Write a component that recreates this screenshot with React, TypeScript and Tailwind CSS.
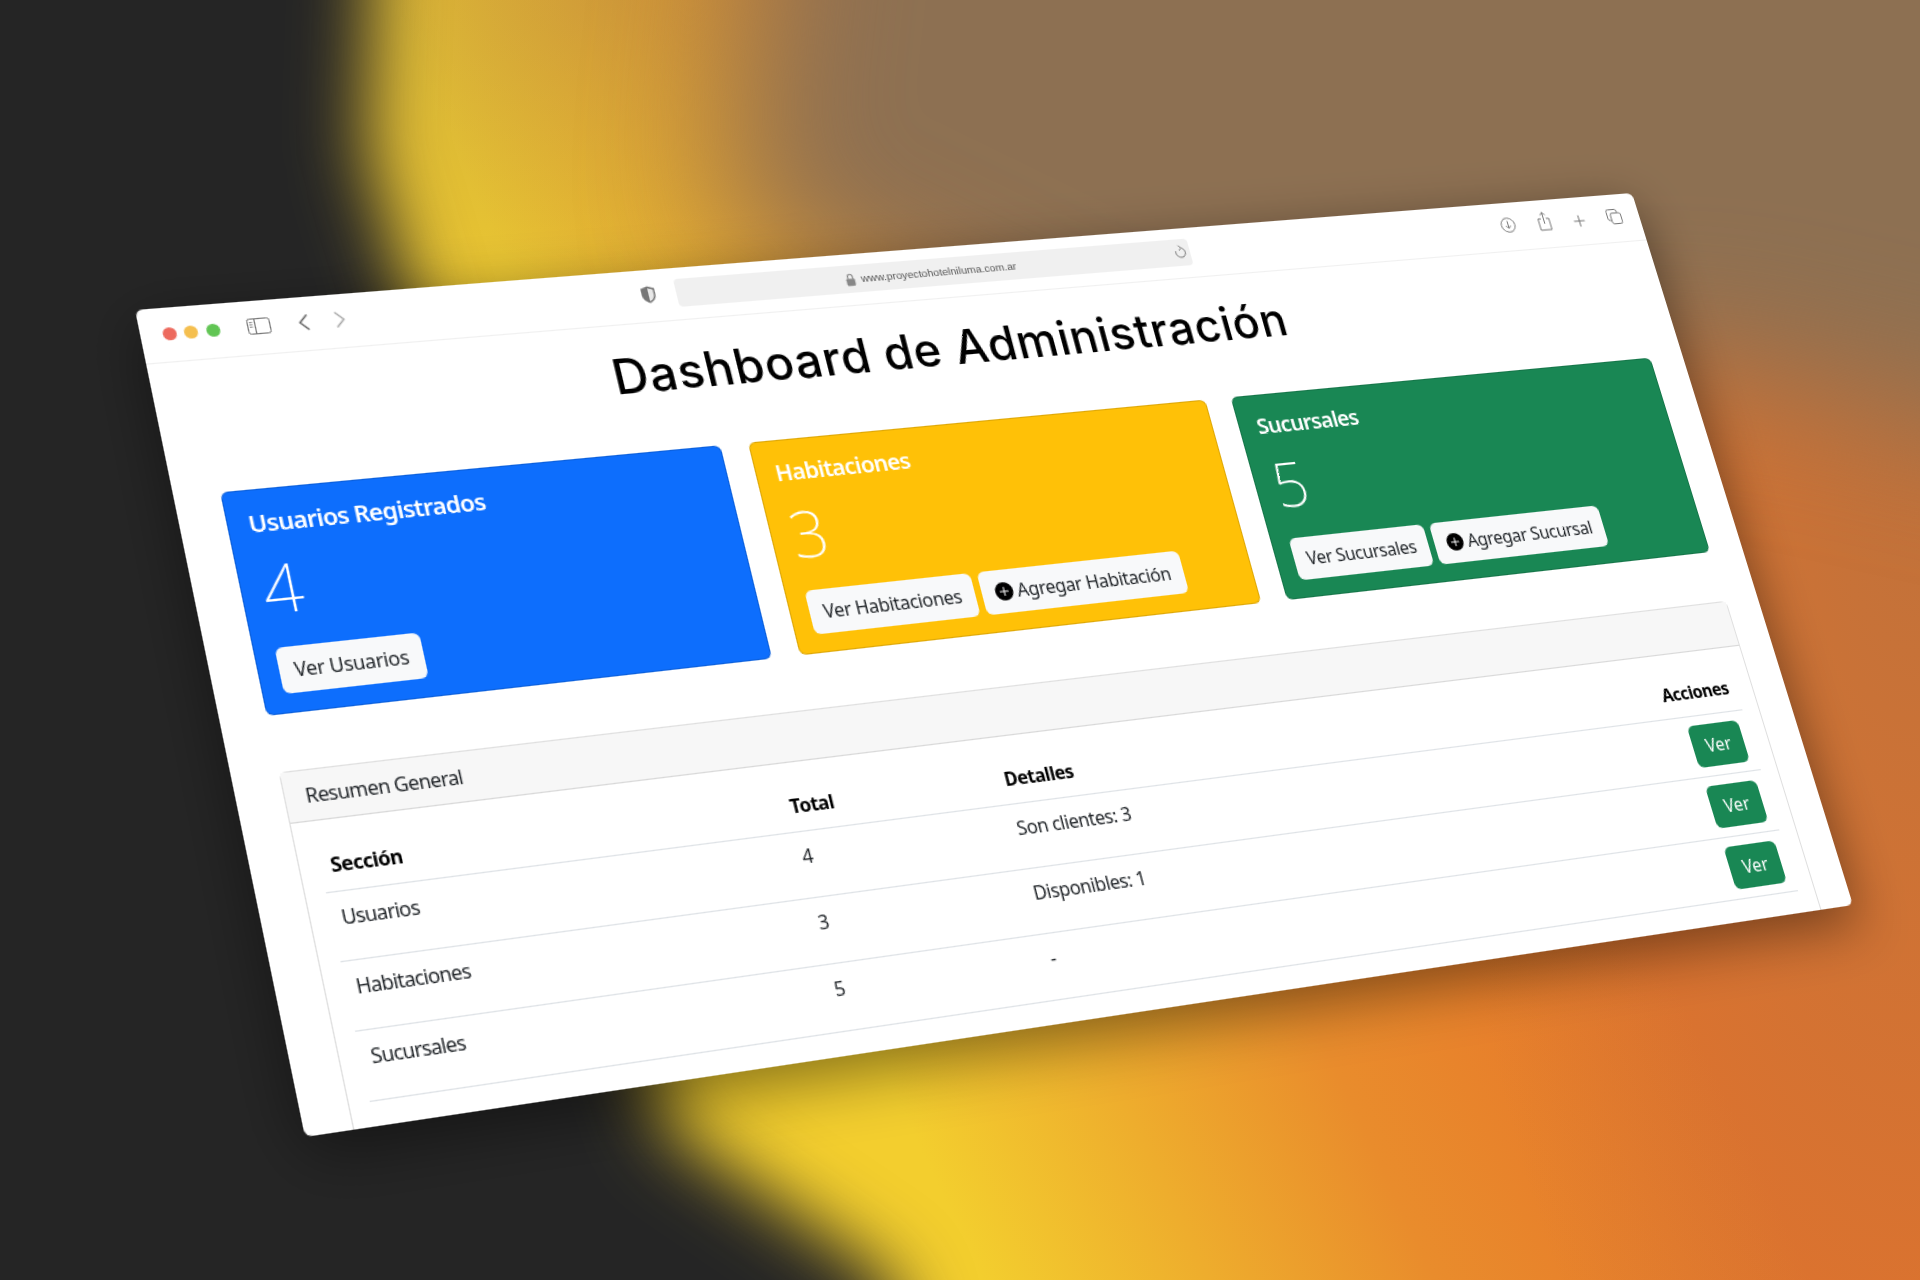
import { BsPlusCircleFill } from 'react-icons/bs'

const rows = [
  { name: 'Usuarios', total: '4', detail: 'Son clientes: 3' },
  { name: 'Habitaciones', total: '3', detail: 'Disponibles: 1' },
  { name: 'Sucursales', total: '5', detail: '-' },
]

function Backdrop() {
  return (
    <>
      <div className="absolute inset-0 bg-[linear-gradient(65deg,#f3ce2e_39%,#e98c2c_57%,#e6732a_72%,#e6732a_100%)]" />
      <div className="absolute inset-0 bg-[radial-gradient(500px_1300px_at_100%_30%,#8d705270_0%,#8d705200_100%)]" />
      <div className="absolute inset-0 bg-[radial-gradient(800px_420px_at_32%_0%,#8d705250_0%,#8d705200_100%)]" />
      <div className="absolute left-[-400px] top-[-400px] h-[2080px] w-[2720px] blur-[70px]">
        <div className="size-full bg-[#8d7052] [clip-path:polygon(1200px_0px,1130px_620px,1500px_800px,2100px_760px,2720px_900px,2720px_0px)]" />
      </div>
      <div className="absolute left-[-400px] top-[-400px] h-[2080px] w-[2720px] blur-[35px]">
        <div className="size-full bg-[#252525] [clip-path:polygon(0px_0px,785px_0px,765px_550px,1070px_1530px,1290px_1680px,1400px_2080px,0px_2080px)]" />
      </div>
    </>
  )
}

function Toolbar() {
  return (
    <div className="relative h-[47px] shrink-0 border-b border-[#f0f0f0]">
      <span className="absolute left-[17.5px] top-[16.5px] size-[11px] rounded-full bg-[#ed6a5e]" />
      <span className="absolute left-[35px] top-[16.5px] size-[11px] rounded-full bg-[#f5bf4f]" />
      <span className="absolute left-[52.5px] top-[16.5px] size-[11px] rounded-full bg-[#61c554]" />

      <svg className="absolute left-[86px] top-[15px]" width="19" height="14" viewBox="0 0 19 14" fill="none" stroke="#777" strokeWidth="1">
        <rect x="0.5" y="0.5" width="18" height="13" rx="2" />
        <path d="M6.5 0.5v13" />
        <path d="M2 3.5h2.5M2 5.5h2.5M2 7.5h2.5" strokeWidth="0.8" />
      </svg>
      <svg className="absolute left-[127px] top-[14px]" width="10" height="16" viewBox="0 0 10 16" fill="none" stroke="#666" strokeWidth="1.4">
        <path d="M8.5 1.5 2 8l6.5 6.5" />
      </svg>
      <svg className="absolute left-[157px] top-[14px]" width="10" height="16" viewBox="0 0 10 16" fill="none" stroke="#aaa" strokeWidth="1.4">
        <path d="M1.5 1.5 8 8l-6.5 6.5" />
      </svg>
      <svg className="absolute left-[416px] top-[13px]" width="14" height="18" viewBox="0 0 13 16">
        <path d="M6.5 1 12 3v5c0 3.5-2.5 5.7-5.5 7C3.500 13.700 1 11.500 1 8V3z" fill="#777" />
        <path d="M6.500 2.600 10.700 4v4c0 2.700-1.900 4.500-4.200 5.500z" fill="#e8e8e8" />
      </svg>

      <div className="absolute left-[447px] top-[10px] flex h-[25px] w-[470px] items-center justify-center rounded-[4px] bg-[#f0f0f0] pr-[14px]">
        <svg className="mr-[5px]" width="9" height="12" viewBox="0 0 8 11">
          <path d="M2 5V3.200a2 2 0 0 1 4 0V5" fill="none" stroke="#888" strokeWidth="1" />
          <rect x="0.500" y="4.700" width="7" height="6" rx="1" fill="#888" />
        </svg>
        <span className="font-['Liberation_Sans',sans-serif] text-[9.700px] leading-none text-[#555]">www.proyectohotelniluma.com.ar</span>
        <svg className="absolute right-[3px] top-[5px]" width="12" height="14" viewBox="0 0 12 14" fill="none" stroke="#777" strokeWidth="1">
          <path d="M7.500 3.300A4.500 4.500 0 1 1 1.800 6" />
          <path d="M5 0.800 7.500 3.300 5 5.500" />
        </svg>
      </div>

      <svg className="absolute left-[1224px] top-[14px]" width="15" height="15" viewBox="0 0 15 15" fill="none" stroke="#777" strokeWidth="1">
        <circle cx="7.500" cy="7.500" r="6.800" />
        <path d="M7.500 3.500v7M5 8.200l2.500 2.500L10 8.200" />
      </svg>
      <svg className="absolute left-[1262px] top-[11px]" width="13" height="19" viewBox="0 0 13 19" fill="none" stroke="#777" strokeWidth="1">
        <path d="M4 7H1v11h11V7H9" />
        <path d="M6.500 12V1M3.800 3.500 6.500 1l2.700 2.500" />
      </svg>
      <svg className="absolute left-[1298px] top-[17px]" width="12" height="12" viewBox="0 0 12 12" fill="none" stroke="#777" strokeWidth="1.100">
        <path d="M6 0.500v11M0.500 6h11" />
      </svg>
      <svg className="absolute left-[1333px] top-[14px]" width="15" height="15" viewBox="0 0 15 15" fill="none" stroke="#777" strokeWidth="1">
        <rect x="4" y="4" width="10.500" height="10.500" rx="2" />
        <path d="M4 11H2.500A2 2 0 0 1 .5 9V2.500A2 2 0 0 1 2.500.5H9a2 2 0 0 1 2 2V4" />
      </svg>
    </div>
  )
}

function StatCard({
  title,
  value,
  color,
  children,
}: {
  title: string
  value: string
  color: string
  children: React.ReactNode
}) {
  return (
    <div className={`h-[186px] rounded-[6px] border border-[#00000020] p-4 text-white ${color}`}>
      <h5 className="mb-2 text-[20px] font-semibold leading-6 tracking-[-0.035em]">{title}</h5>
      <p className="mb-4 text-[56px] font-extralight leading-[67px]">{value}</p>
      <div className="flex gap-[6px]">{children}</div>
    </div>
  )
}

function LightButton({ children }: { children: React.ReactNode }) {
  return (
    <button className="flex h-[38px] items-center gap-1 rounded-[6px] bg-[#f8f9fa] px-3 text-[16px] tracking-[-0.02em] whitespace-nowrap text-[#212529]">
      {children}
    </button>
  )
}

export default function App() {
  return (
    <div className="relative h-[1280px] w-[1920px] overflow-hidden">
      <Backdrop />

      <div className="absolute left-0 top-0 flex h-[675px] w-[1366px] origin-top-left flex-col overflow-hidden rounded-[6px] bg-white font-['Noto_Sans',sans-serif] text-[#212529] shadow-[0_14px_50px_rgba(0,0,0,0.45)] [transform:matrix3d(1.26804,-0.065293,0,0.00010548,0.227674,1.135037,0,-0.00007929,0,0,1,0,135,310,0,1)]">
        <Toolbar />

        <h1 className="mt-[21px] text-center font-['Inter',sans-serif] text-[42px] font-[450] leading-[48px] tracking-[0.018em] text-black">
          Dashboard de Administración
        </h1>

        <div className="mt-[43px] grid grid-cols-3 gap-6 pl-[37px] pr-[33px]">
          <StatCard title="Usuarios Registrados" value="4" color="bg-[#0d6efd]">
            <LightButton>Ver Usuarios</LightButton>
          </StatCard>
          <StatCard title="Habitaciones" value="3" color="bg-[#ffc107]">
            <LightButton>Ver Habitaciones</LightButton>
            <LightButton>
              <BsPlusCircleFill className="size-4 text-black" />
              Agregar Habitación
            </LightButton>
          </StatCard>
          <StatCard title="Sucursales" value="5" color="bg-[#198754]">
            <LightButton>Ver Sucursales</LightButton>
            <LightButton>
              <BsPlusCircleFill className="size-4 text-black" />
              Agregar Sucursal
            </LightButton>
          </StatCard>
        </div>

        <div className="ml-[37px] mt-[46px] w-[1297px] flex-1 rounded-t-[6px] border border-b-0 border-[#00000020]">
          <div className="h-[41px] border-b border-[#00000020] bg-[#f7f7f7] px-4 py-2 leading-6 tracking-[-0.035em]">
            Resumen General
          </div>
          <div className="px-4 pt-4">
            <table className="w-full table-fixed border-collapse text-[16px] tracking-[-0.04em]">
              <colgroup>
                <col className="w-[376px]" />
                <col className="w-[186px]" />
                <col />
                <col className="w-[82px]" />
              </colgroup>
              <thead>
                <tr className="border-b border-[#dee2e6]">
                  <th className="h-[41px] p-2 text-left font-bold tracking-[-0.03em] text-black">Sección</th>
                  <th className="p-2 text-left font-bold tracking-[-0.03em] text-black">Total</th>
                  <th className="p-2 text-left font-bold tracking-[-0.03em] text-black">Detalles</th>
                  <th className="p-2 text-left font-bold tracking-[-0.03em] text-black">Acciones</th>
                </tr>
              </thead>
              <tbody>
                {rows.map((row) => (
                  <tr key={row.name} className="border-b border-[#dee2e6]">
                    <td className="p-2 align-top leading-6">{row.name}</td>
                    <td className="p-2 align-top leading-6">{row.total}</td>
                    <td className="p-2 align-top leading-6 tracking-[-0.025em]">{row.detail}</td>
                    <td className="p-2 text-right align-top">
                      <button className="h-[38px] rounded-[6px] bg-[#198754] px-[13px] tracking-normal text-white">Ver</button>
                    </td>
                  </tr>
                ))}
              </tbody>
            </table>
          </div>
        </div>
      </div>
    </div>
  )
}
